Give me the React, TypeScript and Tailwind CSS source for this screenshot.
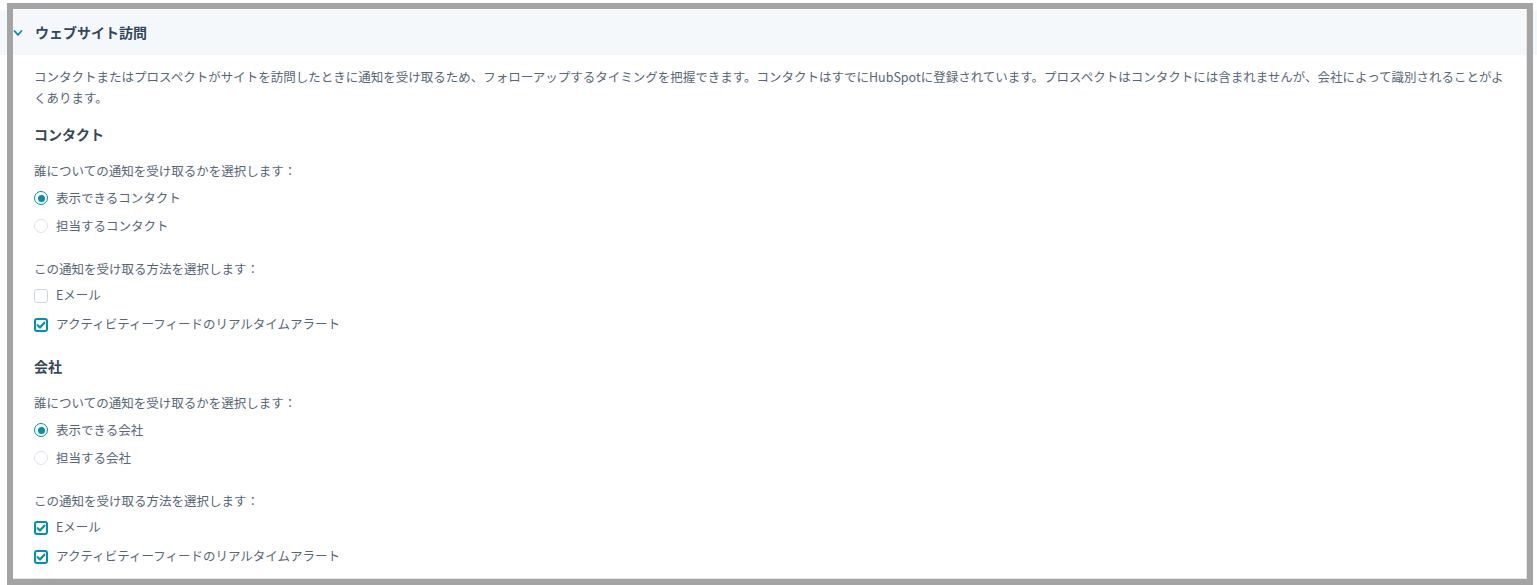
import { useState } from "react";

const font = { fontFamily: '"Noto Sans CJK JP", "Noto Sans", sans-serif' };

function Radio({ checked, label }: { checked?: boolean; label: string }) {
  return (
    <label className="flex items-center gap-[8px] h-[28px] cursor-pointer">
      <span
        className={
          "w-[14px] h-[14px] rounded-full flex items-center justify-center bg-white " +
          (checked ? "border-[1.5px] border-[#0091ae]" : "border border-[#dfe3eb]")
        }
      >
        {checked && <span className="w-[7px] h-[7px] rounded-full bg-[#0091ae]" />}
      </span>
      <span>{label}</span>
    </label>
  );
}

function Check({ checked, label }: { checked?: boolean; label: string }) {
  return (
    <label className="flex items-center gap-[8px] h-[29px] cursor-pointer">
      <span
        className={
          "w-[14px] h-[14px] rounded-[3px] flex items-center justify-center bg-white " +
          (checked ? "border-2 border-[#0091ae]" : "border-[1.5px] border-[#cbd6e2]")
        }
      >
        {checked && (
          <svg viewBox="0 0 12 12" className="w-[10px] h-[10px]">
            <path d="M2 6.2 L4.8 9 L10 3.2" fill="none" stroke="#0091ae" strokeWidth="2.6" strokeLinecap="round" strokeLinejoin="round" />
          </svg>
        )}
      </span>
      <span>{label}</span>
    </label>
  );
}

function Group({
  title,
  who,
  ways,
}: {
  title: string;
  who: [string, string];
  ways: [boolean, boolean];
}) {
  return (
    <div>
      <h3 className="text-[14px] font-bold text-[#33475b] h-[20px] leading-[20px]">{title}</h3>
      <p className="mt-[17px] leading-[20px]">誰についての通知を受け取るかを選択します：</p>
      <div className="mt-[3px]">
        <Radio checked label={who[0]} />
        <Radio label={who[1]} />
      </div>
      <p className="mt-[19px] leading-[20px]">この通知を受け取る方法を選択します：</p>
      <div className="mt-[2px]">
        <Check checked={ways[0]} label="Eメール" />
        <Check checked={ways[1]} label="アクティビティーフィードのリアルタイムアラート" />
      </div>
    </div>
  );
}

export default function App() {
  const [open] = useState(true);
  return (
    <div className="relative w-[1537px] h-[585px] overflow-hidden bg-white" style={font}>
      <div className="pt-[10px]">
        <div className="h-[45px] bg-[#f5f8fa] flex items-center pl-[13px]">
          <svg viewBox="0 0 10 10" className={"w-[10px] h-[10px] " + (open ? "" : "-rotate-90")}>
            <path d="M1.5 3 L5 6.8 L8.5 3" fill="none" stroke="#0091ae" strokeWidth="1.8" strokeLinecap="round" strokeLinejoin="round" />
          </svg>
          <h2 className="ml-[12px] text-[14px] font-bold text-[#33475b]">ウェブサイト訪問</h2>
        </div>
        <div className="pl-[34px] pr-[22px] text-[12.5px] text-[#56667a]">
          <p className="mt-[11px] leading-[21px]">
            コンタクトまたはプロスペクトがサイトを訪問したときに通知を受け取るため、フォローアップするタイミングを把握できます。コンタクトはすでにHubSpotに登録されています。プロスペクトはコンタクトには含まれませんが、会社によって識別されることがよくあります。
          </p>
          <div className="mt-[16px] flex flex-col gap-[17px]">
            <Group title="コンタクト" who={["表示できるコンタクト", "担当するコンタクト"]} ways={[false, true]} />
            <Group title="会社" who={["表示できる会社", "担当する会社"]} ways={[true, true]} />
          </div>
        </div>
      </div>
      <div className="absolute left-[7px] top-[3px] w-[1526px] h-[582px] border-[6px] border-[#a4a4a4] pointer-events-none">
        <div className="w-full h-full border border-[#e5e5e5] border-l-0 border-t-0" />
      </div>
    </div>
  );
}
